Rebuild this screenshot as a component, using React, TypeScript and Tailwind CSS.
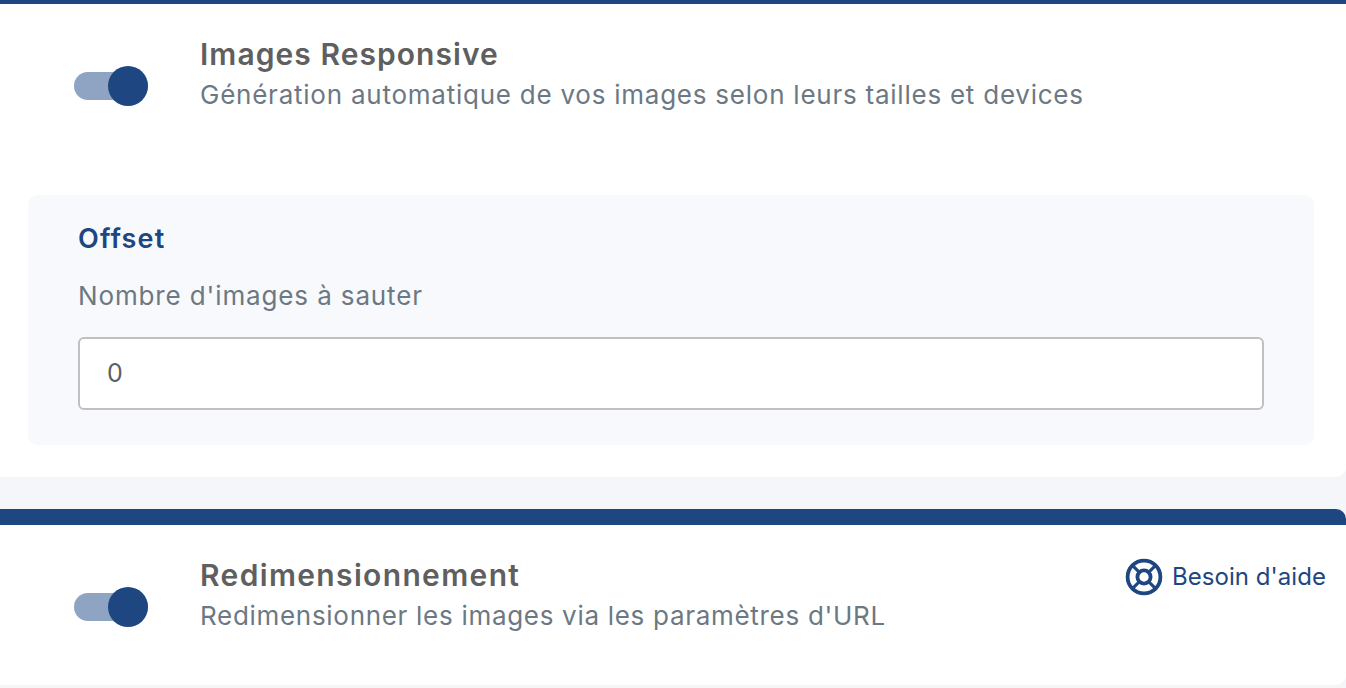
import React from "react";

function Toggle() {
  return (
    <div className="relative h-[28px] w-[74px] shrink-0 rounded-full bg-[#8fa3c2]">
      <div className="absolute right-0 top-[-6px] h-[40px] w-[40px] rounded-full bg-[#1e4680]" />
    </div>
  );
}

function LifeRing() {
  return (
    <svg width="38" height="38" viewBox="0 0 38 38" fill="none" stroke="#1e4680" strokeWidth="3.8">
      <circle cx="19" cy="19" r="16.4" />
      <circle cx="19" cy="19" r="6.6" />
      <path d="M7.4 7.4l7 7M30.6 7.4l-7 7M7.4 30.6l7-7M30.6 30.6l-7-7" strokeWidth="3" />
    </svg>
  );
}

export default function App() {
  return (
    <div className="h-[688px] w-[1346px] overflow-hidden bg-[#f5f6fa] font-['Inter',sans-serif]">
      <section className="h-[477px] rounded-br-[10px] border-t-4 border-[#1e4680] bg-white">
        <div className="flex h-[191px] items-start pl-[74px]">
          <div className="mt-[68px]">
            <Toggle />
          </div>
          <div className="ml-[52px] mt-[29px]">
            <h2 className="text-[30px] font-semibold leading-[42px] tracking-[1.05px] text-[#5f5f5f]">Images Responsive</h2>
            <p className="text-[26px] leading-[40px] tracking-[0.76px] text-[#6c7883]">
              Génération automatique de vos images selon leurs tailles et devices
            </p>
          </div>
        </div>
        <div className="ml-[28px] mr-[32px] h-[250px] rounded-[10px] bg-[#f8f9fd] px-[50px] pt-[25px]">
          <h3 className="text-[27px] font-semibold leading-[38px] tracking-[1.15px] text-[#1e4680]">Offset</h3>
          <p className="mt-[19px] text-[26px] leading-[38px] tracking-[0.87px] text-[#6c7883]">Nombre d'images à sauter</p>
          <div className="mt-[22px] flex h-[73px] items-center rounded-[6px] border-2 border-[#c0c0c0] bg-white pl-[27px] text-[25px] text-[#5f5f5f]">
            0
          </div>
        </div>
      </section>
      <section className="mt-[32px] h-[176px] rounded-br-[10px] rounded-tr-[10px] border-t-[16px] border-[#1e4680] bg-white">
        <div className="flex items-start pl-[74px]">
          <div className="mt-[68px]">
            <Toggle />
          </div>
          <div className="ml-[52px] mt-[29px] grow">
            <h2 className="text-[30px] font-semibold leading-[42px] tracking-[1.35px] text-[#5f5f5f]">Redimensionnement</h2>
            <p className="text-[26px] leading-[40px] tracking-[0.7px] text-[#6c7883]">
              Redimensionner les images via les paramètres d'URL
            </p>
          </div>
          <a className="mr-[20px] mt-[33px] flex items-center gap-[9px] text-[24px] tracking-[0.05px] text-[#1e4680]">
            <LifeRing />
            Besoin d'aide
          </a>
        </div>
      </section>
    </div>
  );
}
